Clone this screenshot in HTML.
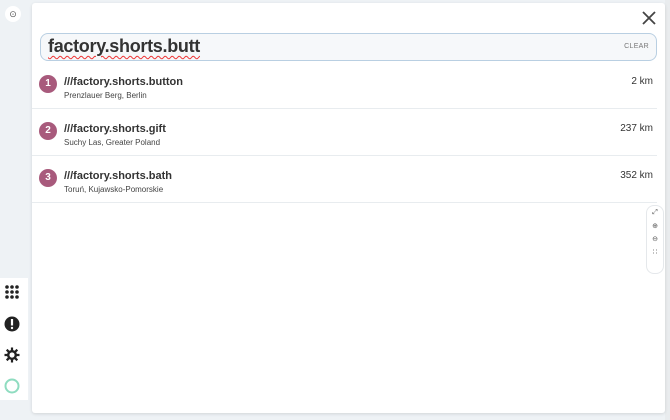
<!DOCTYPE html>
<html><head><style>
body{margin:0;width:670px;height:420px;background:#eef2f5;position:relative;overflow:hidden;font-family:"Liberation Sans",sans-serif;color:#333}
.panel{position:absolute;left:32px;top:3px;width:633px;height:410px;background:#fff;border-radius:3px;box-shadow:0 1px 3px rgba(0,0,0,.12)}
.search{position:absolute;left:8px;top:30px;width:615px;height:26px;border:1px solid #b9cfe2;border-radius:8px;background:#f6f8fa}
.search .t{position:absolute;left:7px;top:2px;font-size:18px;font-weight:bold;color:#333;letter-spacing:-.3px;text-decoration:underline wavy #e33;text-decoration-thickness:1px;text-underline-offset:3px}
.search .c{position:absolute;right:7px;top:9px;font-size:7px;color:#777;letter-spacing:.3px}
.row{position:absolute;left:0;width:625px;height:46px;border-bottom:1px solid #e8ecef}
.b{position:absolute;left:7px;top:13px;width:18px;height:18px;border-radius:50%;background:#a85a7c;color:#fff;font-size:10px;font-weight:bold;text-align:center;line-height:18px}
.w{position:absolute;left:32px;top:14px;font-size:11px;font-weight:bold;color:#333}
.s{position:absolute;left:32px;top:29px;font-size:8px;color:#444}
.d{position:absolute;right:4px;top:14px;font-size:10px;color:#333}
.x{position:absolute;left:610px;top:8px}
.left{position:absolute;left:0;top:278px;width:28px;height:122px;background:#fff}
.ctl{position:absolute;left:646px;top:205px;width:16px;height:67px;background:#fff;border:1px solid #e5e8eb;border-radius:8px;font-size:7px;color:#555;text-align:center}
</style></head><body>
<div style="position:absolute;left:5px;top:6px;width:16px;height:16px;border-radius:50%;background:#fff;font-size:9px;text-align:center;line-height:16px;color:#555">⊙</div>
<div style="position:absolute;left:665px;top:0;width:5px;height:420px;background:#e9ecee"></div>
<div class="panel">
<svg class="x" width="14" height="14" viewBox="0 0 14 14"><path d="M1 1L13 13M13 1L1 13" stroke="#444" stroke-width="1.8"/></svg>
<div class="search"><span class="t">factory.shorts.butt</span><span class="c">CLEAR</span></div>
<div class="row" style="top:59px"><div class="b">1</div><div class="w">///factory.shorts.button</div><div class="s">Prenzlauer Berg, Berlin</div><div class="d">2 km</div></div>
<div class="row" style="top:106px"><div class="b">2</div><div class="w">///factory.shorts.gift</div><div class="s">Suchy Las, Greater Poland</div><div class="d">237 km</div></div>
<div class="row" style="top:153px"><div class="b">3</div><div class="w">///factory.shorts.bath</div><div class="s">Toruń, Kujawsko-Pomorskie</div><div class="d">352 km</div></div>
</div>
<div class="ctl"><div style="margin-top:3px">⤢</div><div style="margin-top:5px">⊕</div><div style="margin-top:5px">⊖</div><div style="margin-top:5px">∷</div></div>
<div class="left">
<svg style="position:absolute;left:4px;top:6px" width="16" height="16" viewBox="0 0 16 16" fill="#222"><circle cx="3" cy="3" r="1.8"/><circle cx="8" cy="3" r="1.8"/><circle cx="13" cy="3" r="1.8"/><circle cx="3" cy="8" r="1.8"/><circle cx="8" cy="8" r="1.8"/><circle cx="13" cy="8" r="1.8"/><circle cx="3" cy="13" r="1.8"/><circle cx="8" cy="13" r="1.8"/><circle cx="13" cy="13" r="1.8"/></svg>
<svg style="position:absolute;left:4px;top:38px" width="16" height="16" viewBox="0 0 16 16"><circle cx="8" cy="8" r="7.5" fill="#222"/><rect x="6.9" y="3" width="2.2" height="6.5" fill="#fff"/><circle cx="8" cy="12" r="1.2" fill="#fff"/></svg>
<svg style="position:absolute;left:4px;top:69px" width="16" height="16" viewBox="0 0 16 16"><g stroke="#222" stroke-width="2.2"><path d="M8 0.5V15.5M0.5 8H15.5M2.7 2.7L13.3 13.3M13.3 2.7L2.7 13.3"/></g><circle cx="8" cy="8" r="5" fill="#222"/><circle cx="8" cy="8" r="2.6" fill="#fff"/></svg>
<svg style="position:absolute;left:4px;top:100px" width="16" height="16" viewBox="0 0 16 16"><circle cx="8" cy="8" r="6.5" fill="none" stroke="#8fdcc0" stroke-width="2"/></svg>
</div>
</body></html>
